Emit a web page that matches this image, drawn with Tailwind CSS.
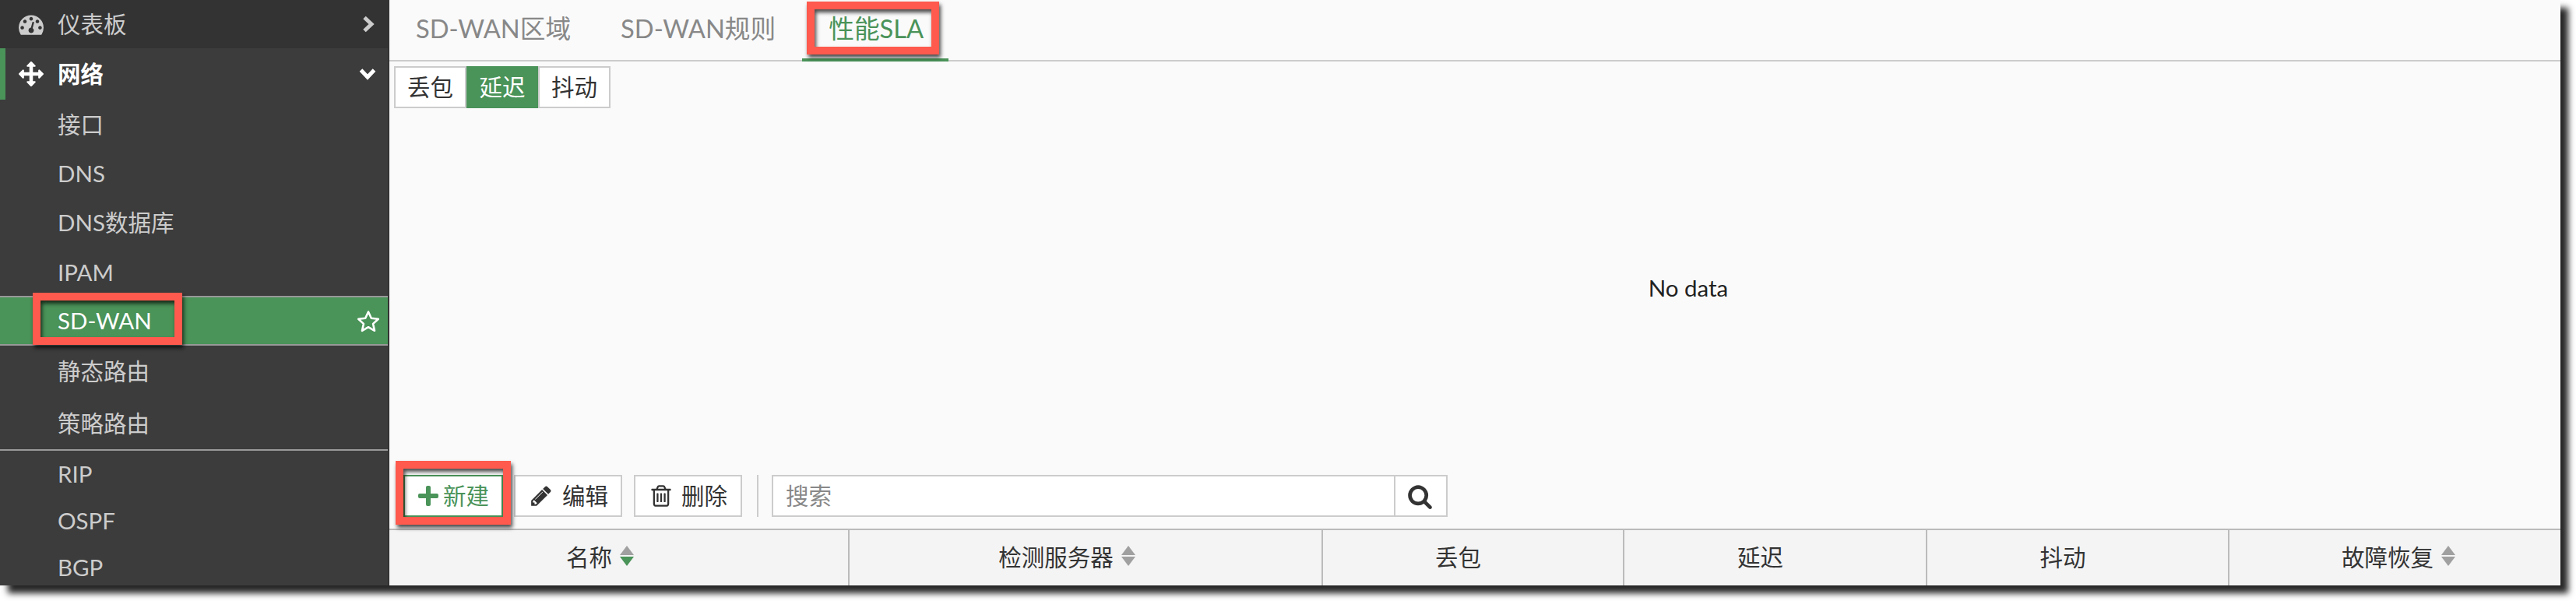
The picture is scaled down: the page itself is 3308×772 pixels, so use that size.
<!DOCTYPE html>
<html lang="zh-CN">
<head>
    <meta charset="UTF-8">
    <title>SD-WAN</title>
    <script src="https://cdn.jsdelivr.net/npm/@tailwindcss/browser@4"></script>
</head>
<body class="bg-white w-[3308px] h-[772px] overflow-hidden font-['Lato','Noto_Sans_CJK_SC',sans-serif] text-[29.5px] text-[#333]">

    <div class="relative flex w-[3288px] h-[752px] bg-[#fafafa] shadow-[10px_10px_8px_rgba(0,0,0,0.85)]">

        <!-- Sidebar -->
        <aside class="w-[500px] h-full bg-[#333] overflow-hidden shrink-0">
            <div class="flex items-center h-[62px] pl-[24px] pr-[19px] text-[#ccc]">
                <svg class="w-[32px] h-[32px] mr-[18px]" viewBox="0 0 1792 1792" fill="#ccc"><path d="M384 1152q0-53-37.5-90.5T256 1024t-90.5 37.5T128 1152t37.5 90.5T256 1280t90.5-37.5T384 1152zm192-448q0-53-37.5-90.5T448 576t-90.5 37.5T320 704t37.5 90.5T448 832t90.5-37.5T576 704zm428 481l101-382q6-26-7.5-48.5T1059 725t-48 6.5-30 39.5l-101 382q-60 5-107 43.5t-63 98.5q-20 77 20 146t117 89 146-20 89-117q16-60-6-117t-72-91zm660-33q0-53-37.5-90.5T1536 1024t-90.5 37.5-37.5 90.5 37.5 90.5 90.5 37.5 90.5-37.5 37.5-90.5zm-640-640q0-53-37.5-90.5T896 384t-90.5 37.5T768 512t37.5 90.5T896 640t90.5-37.5T1024 512zm448 192q0-53-37.5-90.5T1344 576t-90.5 37.5T1216 704t37.5 90.5 90.5 37.5 90.5-37.5T1472 704zm320 448q0 261-141 483-19 29-54 29H195q-35 0-54-29Q0 1414 0 1152q0-182 71-348t191-286 286-191 348-71 348 71 286 191 191 286 71 348z"/></svg>
                <span>仪表板</span>
                <svg class="ml-auto w-[16px] h-[22px]" viewBox="0 0 16 22" fill="none" stroke="#ccc" stroke-width="5"><path d="M3 2.5l9 8.5-9 8.5"/></svg>
            </div>
            <div class="w-[498px] h-[690px] bg-[#3c3c3c]">
                <div class="flex items-center h-[66px] pl-[17px] pr-[15px] border-l-[7px] border-[#4a9359] font-bold text-white">
                    <svg class="w-[32px] h-[32px] mr-[18px]" viewBox="0 0 1792 1792" fill="#fff"><path d="M1792 896q0 26-19 45l-256 256q-19 19-45 19t-45-19-19-45v-128h-384v384h128q26 0 45 19t19 45-19 45l-256 256q-19 19-45 19t-45-19l-256-256q-19-19-19-45t19-45 45-19h128v-384H384v128q0 26-19 45t-45 19-45-19L19 941Q0 922 0 896t19-45l256-256q19-19 45-19t45 19 19 45v128h384V384H640q-26 0-45-19t-19-45 19-45l256-256q19-19 45-19t45 19l256 256q19 19 19 45t-19 45-45 19h-128v384h384V640q0-26 19-45t45-19 45 19l256 256q19 19 19 45z"/></svg>
                    <span>网络</span>
                    <svg class="ml-auto w-[22px] h-[16px]" viewBox="0 0 22 16" fill="none" stroke="#fff" stroke-width="5"><path d="M2.5 3l8.5 9 8.5-9"/></svg>
                </div>
                <div class="flex flex-col pt-[1px] text-[#ccc]">
                    <div class="flex items-center h-[63px] pl-[74px]">接口</div>
                    <div class="flex items-center h-[63px] pl-[74px]">DNS</div>
                    <div class="flex items-center h-[63px] pl-[74px]">DNS数据库</div>
                    <div class="flex items-center h-[62px] pt-[2px] pl-[74px]">IPAM</div>
                    <div class="flex items-center h-[64px] pl-[74px] pr-[10px] bg-[#4a9359] border-y-2 border-[#999] text-white">
                        <span>SD-WAN</span>
                        <svg class="ml-auto w-[30px] h-[29px]" viewBox="0 0 30 29" fill="none" stroke="#fff" stroke-width="2.6" stroke-linejoin="round"><path d="M15 2.5l3.8 8.3 9 1-6.7 6.1 1.9 8.9-8-4.6-8 4.6 1.9-8.9-6.7-6.1 9-1z"/></svg>
                    </div>
                    <div class="flex items-center h-[67px] pl-[74px]">静态路由</div>
                    <div class="flex items-center h-[66px] pl-[74px]">策略路由</div>
                    <div class="h-[2px] bg-[#999]"></div>
                    <div class="flex items-center h-[60px] pl-[74px]">RIP</div>
                    <div class="flex items-center h-[60px] pl-[74px]">OSPF</div>
                    <div class="flex items-center h-[60px] pl-[74px]">BGP</div>
                </div>
            </div>
        </aside>

        <!-- Main -->
        <main class="flex flex-col flex-1 min-w-0">
            <nav class="flex h-[79px] border-b-2 border-[#ccc] text-[32.7px] text-[#888]">
                <div class="flex items-center h-[79px] pl-[34px] pr-[30px] pb-[6px]">SD-WAN区域</div>
                <div class="flex items-center h-[79px] px-[34px] pb-[6px]">SD-WAN规则</div>
                <div class="flex items-center h-[79px] pl-[34px] pr-[32px] pb-[2px] border-b-4 border-[#4a9359] text-[#4a9359]">性能SLA</div>
            </nav>

            <div class="flex ml-[6px] mt-[6px] h-[54px]">
                <div class="flex items-center justify-center w-[93px] bg-white border-2 border-[#ccc]">丢包</div>
                <div class="flex items-center justify-center w-[92px] bg-[#4a9359] text-white">延迟</div>
                <div class="flex items-center justify-center w-[93px] bg-white border-2 border-[#ccc]">抖动</div>
            </div>

            <div class="flex flex-1 items-center justify-center pb-[8px] pl-[548px]">
                <span class="text-[#222]">No data</span>
            </div>

            <div class="flex items-center h-[54px] pl-[18px]">
                <button class="flex items-center w-[128px] h-[54px] pl-[17px] bg-white border-2 border-[#4a9359] text-[#4a9359]">
                    <svg class="w-[26px] h-[26px] mr-[6px]" viewBox="0 0 26 26" fill="#4a9359"><path d="M10 2q0-2 2-2h2q2 0 2 2v8h8q2 0 2 2v2q0 2-2 2h-8v8q0 2-2 2h-2q-2 0-2-2v-8H2q-2 0-2-2v-2q0-2 2-2h8z"/></svg>
                    <span>新建</span>
                </button>
                <button class="flex items-center w-[139px] h-[54px] ml-[14px] pl-[18px] bg-white border-2 border-[#ccc]">
                    <svg class="w-[30px] h-[30px] mr-[12px]" viewBox="0 0 1792 1792" fill="#333"><path d="M491 1536l91-91-235-235-91 91v107h128v128h107zm523-928q0-22-22-22-10 0-17 7L434 1134q-7 7-7 17 0 22 22 22 10 0 17-7l542-542q7-7 7-17zm-54-192l416 416-832 832H128v-416zm683 96q0 53-37 90l-166 166-416-416 166-165q36-38 90-38 53 0 91 38l235 234q37 39 37 91z"/></svg>
                    <span>编辑</span>
                </button>
                <button class="flex items-center w-[139px] h-[54px] ml-[15px] pl-[17px] bg-white border-2 border-[#ccc]">
                    <svg class="w-[32px] h-[32px] mr-[10px]" viewBox="0 0 1792 1792" fill="#333"><path d="M704 736v576q0 14-9 23t-23 9h-64q-14 0-23-9t-9-23V736q0-14 9-23t23-9h64q14 0 23 9t9 23zm256 0v576q0 14-9 23t-23 9h-64q-14 0-23-9t-9-23V736q0-14 9-23t23-9h64q14 0 23 9t9 23zm256 0v576q0 14-9 23t-23 9h-64q-14 0-23-9t-9-23V736q0-14 9-23t23-9h64q14 0 23 9t9 23zm128 724V512H448v948q0 22 7 40.5t14.5 27 10.5 8.5h832q3 0 10.5-8.5t14.5-27 7-40.5zM672 384h448l-48-117q-7-9-17-11H738q-10 2-17 11zm928 32v64q0 14-9 23t-23 9h-96v948q0 83-47 143.5t-113 60.5H480q-66 0-113-58.5T320 1464V512h-96q-14 0-23-9t-9-23v-64q0-14 9-23t23-9h309l70-167q15-37 54-63t79-26h320q40 0 79 26t54 63l70 167h309q14 0 23 9t9 23z"/></svg>
                    <span>删除</span>
                </button>
                <div class="w-[2px] h-[54px] ml-[19px] bg-[#ccc]"></div>
                <div class="flex w-[868px] h-[54px] ml-[17px] bg-white border-2 border-[#ccc]">
                    <div class="flex items-center flex-1 pl-[16px] text-[#888]">搜索</div>
                    <div class="flex items-center justify-center w-[67px] border-l-2 border-[#ccc]">
                        <svg class="w-[33px] h-[33px] -ml-[2px]" viewBox="0 0 1792 1792" fill="#333"><path d="M1216 832q0-185-131.5-316.5T768 384 451.5 515.5 320 832t131.5 316.5T768 1280t316.5-131.5T1216 832zm512 832q0 52-38 90t-90 38q-54 0-90-38l-343-342q-179 124-399 124-143 0-273.5-55.5t-225-150-150-225T64 832t55.5-273.5 150-225 225-150T768 128t273.5 55.5 225 150 150 225T1472 832q0 220-124 399l343 343q37 37 37 90z"/></svg>
                    </div>
                </div>
            </div>

            <div class="grid grid-cols-[589px_608px_387px_389px_388px_427px] h-[73px] mt-[15px] border-t-2 border-[#bbb] bg-[#f4f4f4]">
                <div class="flex items-center justify-center pr-[48px]">
                    <span>名称</span>
                    <svg class="w-[18px] h-[26px] ml-[10px] -mt-[6px]" viewBox="0 0 18 26"><path d="M9 0l9 12H0z" fill="#a0a0a0"/><path d="M0 14h18l-9 12z" fill="#4a9359"/></svg>
                </div>
                <div class="flex items-center justify-center pr-[48px] border-l-2 border-[#bbb]">
                    <span>检测服务器</span>
                    <svg class="w-[18px] h-[26px] ml-[10px] -mt-[6px]" viewBox="0 0 18 26" fill="#a0a0a0"><path d="M9 0l9 12H0z"/><path d="M0 14h18l-9 12z"/></svg>
                </div>
                <div class="flex items-center justify-center pr-[38px] border-l-2 border-[#bbb]">丢包</div>
                <div class="flex items-center justify-center pr-[38px] border-l-2 border-[#bbb]">延迟</div>
                <div class="flex items-center justify-center pr-[38px] border-l-2 border-[#bbb]">抖动</div>
                <div class="flex items-center justify-center pl-[9px] border-l-2 border-[#bbb]">
                    <span>故障恢复</span>
                    <svg class="w-[18px] h-[26px] ml-[10px] -mt-[6px]" viewBox="0 0 18 26" fill="#a0a0a0"><path d="M9 0l9 12H0z"/><path d="M0 14h18l-9 12z"/></svg>
                </div>
            </div>
        </main>

        <!-- Red highlight boxes drawn over the screenshot -->
        <div class="absolute left-[42px] top-[376px] w-[192px] h-[67px] border-[10px] border-[#ff5a4d] shadow-[2px_4px_5px_rgba(0,0,0,0.7),inset_2px_4px_5px_rgba(0,0,0,0.7)]"></div>
        <div class="absolute left-[1036px] top-[2px] w-[170px] h-[68px] border-[10px] border-[#ff5a4d] shadow-[2px_4px_5px_rgba(0,0,0,0.7),inset_2px_4px_5px_rgba(0,0,0,0.7)]"></div>
        <div class="absolute left-[508px] top-[592px] w-[148px] h-[82px] border-[10px] border-[#ff5a4d] shadow-[2px_4px_5px_rgba(0,0,0,0.7),inset_2px_4px_5px_rgba(0,0,0,0.7)]"></div>
    </div>

</body>
</html>
